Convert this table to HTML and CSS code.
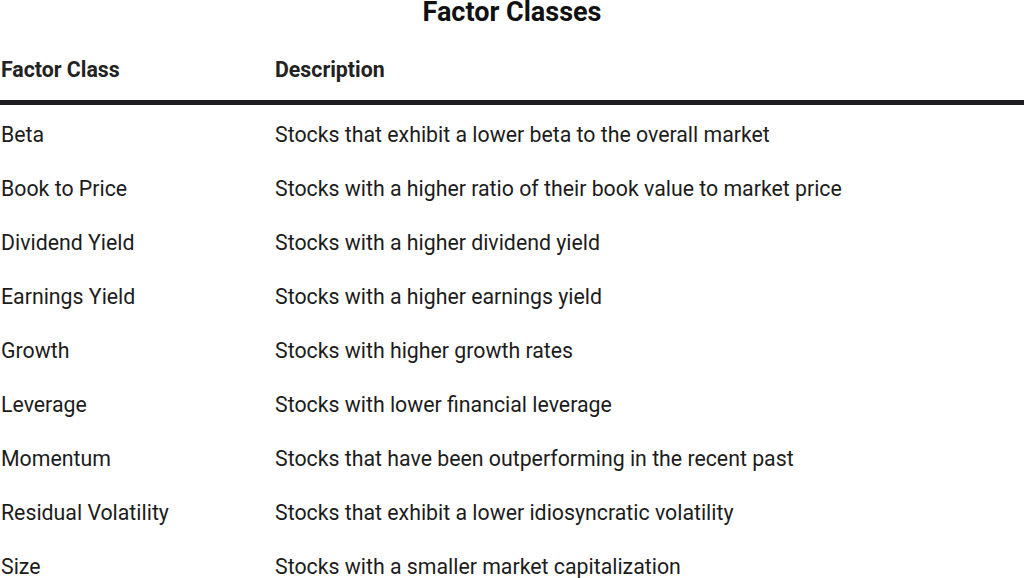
FILE: index.html
```html
<!DOCTYPE html>
<html>
<head>
<meta charset="utf-8">
<link rel="stylesheet" href="styles.css">
</head>
<body>
<h1 class="title">Factor Classes</h1>
<table class="factors">
  <thead>
    <tr><th>Factor Class</th><th>Description</th></tr>
  </thead>
  <tbody>
    <tr><td>Beta</td><td>Stocks that exhibit a lower beta to the overall market</td></tr>
    <tr><td>Book to Price</td><td>Stocks with a higher ratio of their book value to market price</td></tr>
    <tr><td>Dividend Yield</td><td>Stocks with a higher dividend yield</td></tr>
    <tr><td>Earnings Yield</td><td>Stocks with a higher earnings yield</td></tr>
    <tr><td>Growth</td><td>Stocks with higher growth rates</td></tr>
    <tr><td>Leverage</td><td>Stocks with lower financial leverage</td></tr>
    <tr><td>Momentum</td><td>Stocks that have been outperforming in the recent past</td></tr>
    <tr><td>Residual Volatility</td><td>Stocks that exhibit a lower idiosyncratic volatility</td></tr>
    <tr><td>Size</td><td>Stocks with a smaller market capitalization</td></tr>
  </tbody>
</table>
</body>
</html>
```
FILE: styles.css
```css
html, body {
  margin: 0;
  padding: 0;
  background: #ffffff;
}
body {
  font-family: Roboto, "Liberation Sans", sans-serif;
  color: #1c1c1c;
  width: 1024px;
  overflow: hidden;
}
.title {
  margin: 0;
  text-align: center;
  font-size: 27px;
  line-height: 24px;
  font-weight: 700;
  color: #111;
}
.factors {
  width: 100%;
  border-collapse: collapse;
  border-spacing: 0;
}
.factors th {
  text-align: left;
  font-weight: 700;
  font-size: 21.3px;
  line-height: 24px;
  padding: 34px 0 18px 1px;
  border-bottom: 5px solid #1e1e22;
  color: #222;
}
.factors td {
  font-size: 21.3px;
  line-height: 24px;
  padding: 18px 0 12px 1px;
  color: #1c1c1c;
}
.factors th:first-child,
.factors td:first-child {
  width: 273px;
}
```
